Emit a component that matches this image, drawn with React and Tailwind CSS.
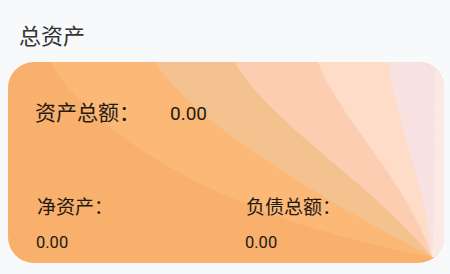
import React from "react";

const W = 436;
const H = 201;
const END = "424 195";

const layers = [
  { fill: "#fbb877", x: 42, c: "90 80 230 160" },
  { fill: "#f4c28f", x: 147, c: "185 60 310 135" },
  { fill: "#fdcdb1", x: 227, c: "260 60 365 122" },
  { fill: "#fedcc7", x: 310, c: "330 55 400 120" },
  { fill: "#f7e2e1", x: 380, c: "388 60 418 125" },
  { fill: "#fce9e3", x: 427, c: "426 70 428 140" },
];

function Fan() {
  return (
    <svg
      className="absolute inset-0"
      width={W}
      height={H}
      viewBox={`0 0 ${W} ${H}`}
      preserveAspectRatio="none"
    >
      <rect x="0" y="0" width={W} height={H} fill="#f8b06c" />
      {layers.map((l, i) => (
        <path
          key={i}
          d={`M${l.x} 0 C${l.c} ${END} L440 195 L440 -2 L${l.x} -2 Z`}
          fill={l.fill}
        />
      ))}
    </svg>
  );
}

export default function App() {
  return (
    <div
      className="w-[450px] h-[274px] bg-[#f8f9fb] overflow-hidden"
      style={{ fontFamily: 'Roboto, "Noto Sans CJK SC", sans-serif' }}
    >
      <div className="pt-[26px] pl-[19px] text-[22px] leading-[22px] text-[#333333]">
        总资产
      </div>
      <div className="relative mt-[14px] ml-[8px] w-[436px] h-[201px] rounded-[26px] overflow-hidden">
        <Fan />
        <div className="relative flex flex-col pt-[41px] text-[#231a14]">
          <div className="flex items-baseline pl-[27px]">
            <span className="w-[135px] text-[21px] leading-[21px]">资产总额：</span>
            <span className="text-[19px] leading-[21px]">0.00</span>
          </div>
          <div className="grid grid-cols-[209px_1fr] mt-[74px] pl-[29px]">
            <div className="flex flex-col">
              <span className="text-[19px] leading-[19px]">净资产：</span>
              <span className="mt-[17px] -ml-[1px] text-[16.5px] leading-[17px]">0.00</span>
            </div>
            <div className="flex flex-col">
              <span className="text-[19px] leading-[19px]">负债总额：</span>
              <span className="mt-[17px] -ml-[1px] text-[16.5px] leading-[17px]">0.00</span>
            </div>
          </div>
        </div>
      </div>
    </div>
  );
}
